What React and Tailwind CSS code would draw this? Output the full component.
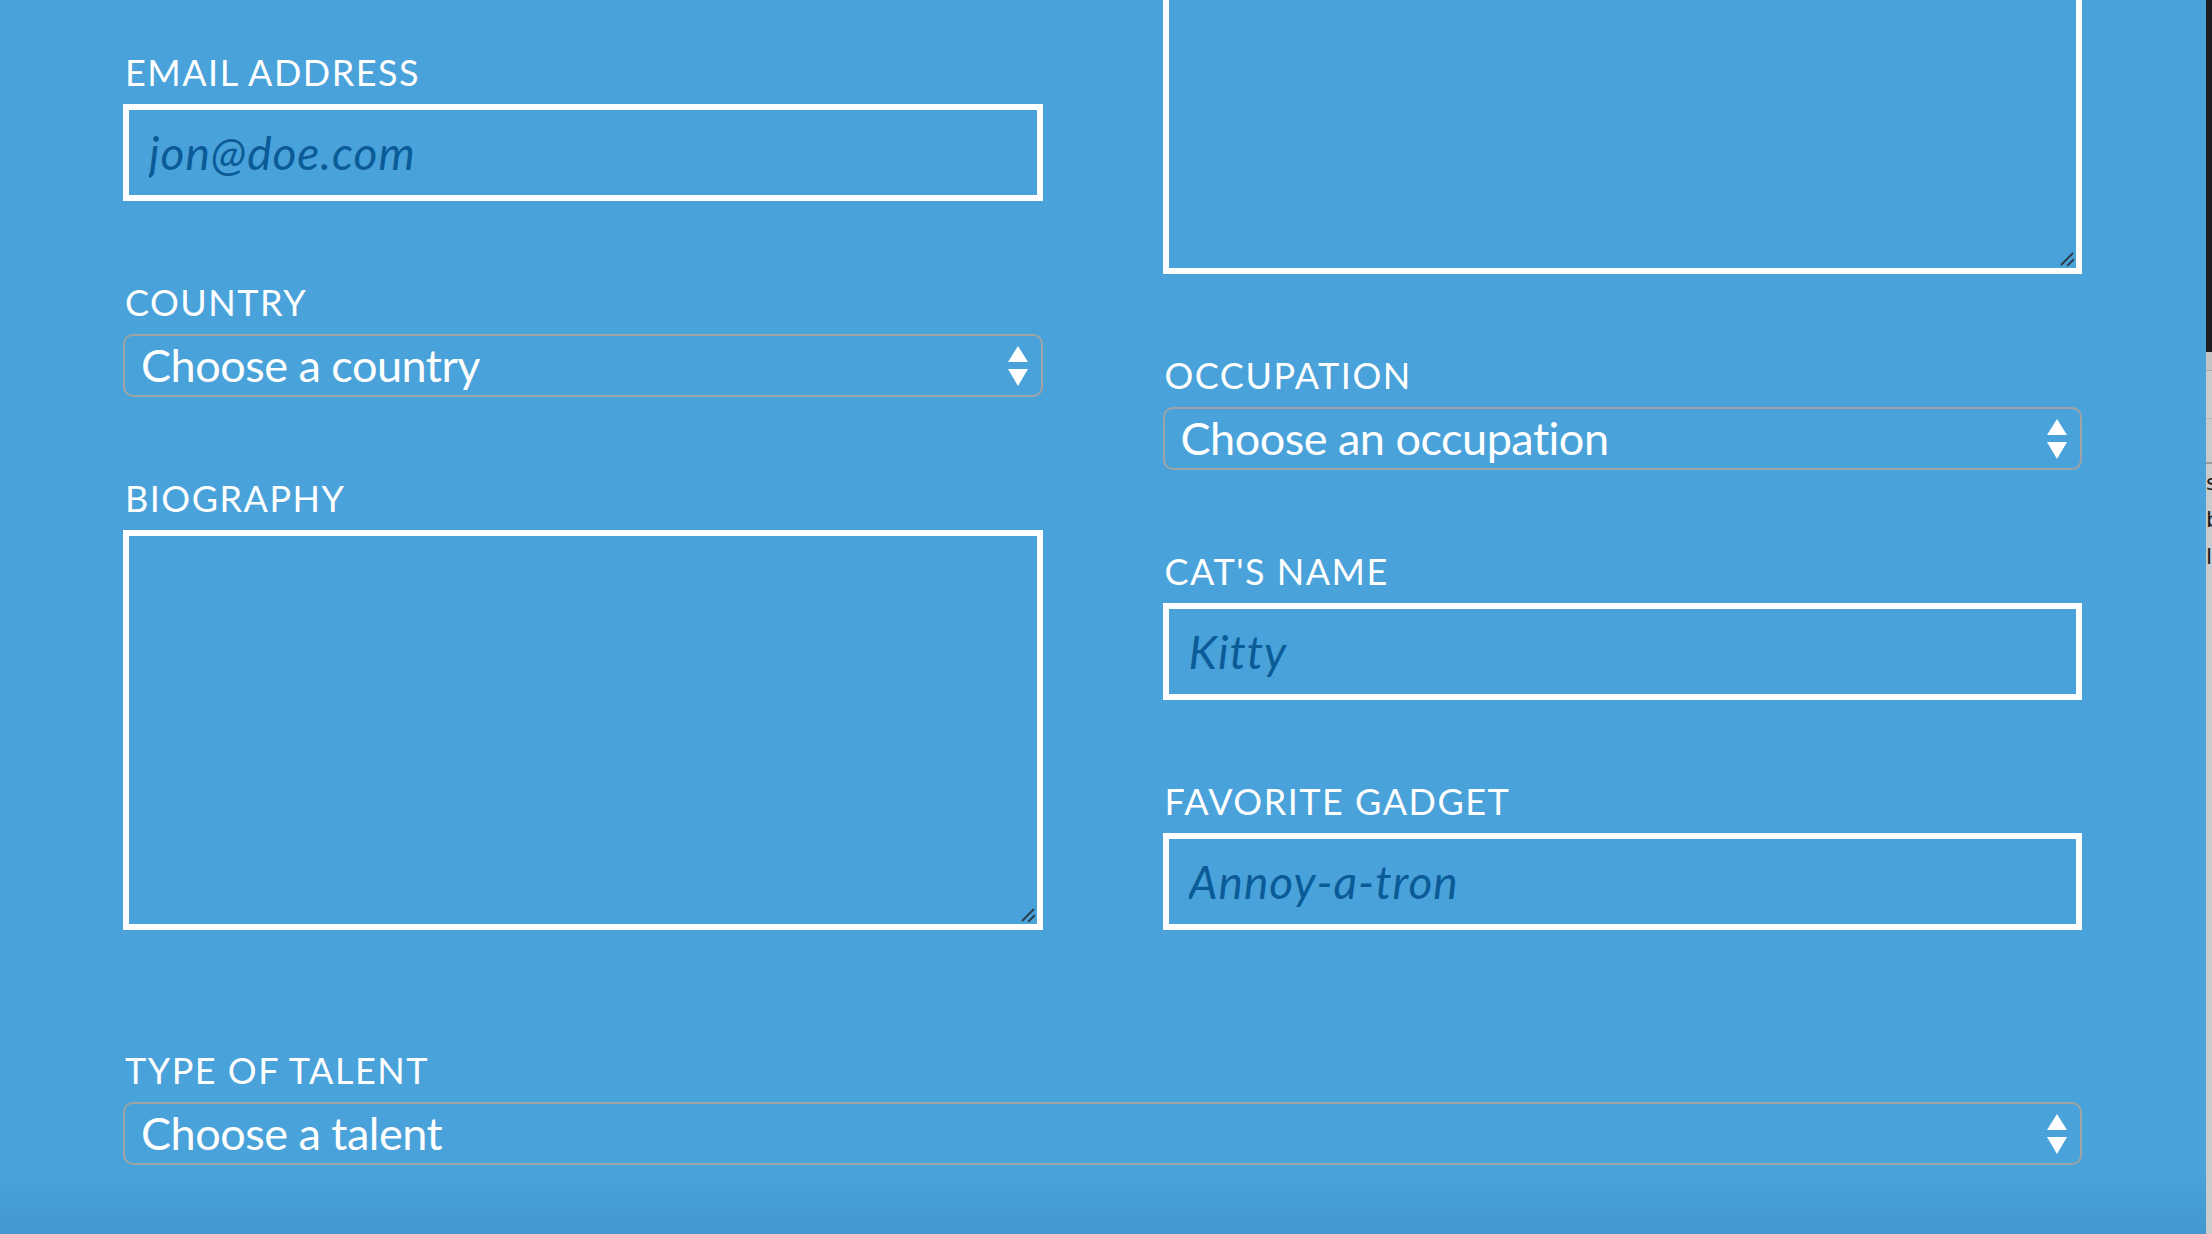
import { useState } from "react";

const labelCls =
  "block text-[36px] leading-[36px] tracking-[1.5px] text-white uppercase pl-[2px] mb-[14px]";
const inputCls =
  "block w-full h-[97px] border-[6px] border-white bg-transparent px-[20px] text-[46px] tracking-[1px] text-white outline-none placeholder:italic placeholder:text-[#0b5b98]";

function Field({ label, className = "", children }) {
  return (
    <div className={className}>
      <label className={labelCls}>{label}</label>
      {children}
    </div>
  );
}

function Arrows() {
  return (
    <svg
      className="pointer-events-none absolute right-[15px] top-1/2 -translate-y-1/2"
      width="20"
      height="40"
      viewBox="0 0 20 40"
    >
      <path d="M10 0 L20 16 L0 16 Z" fill="white" />
      <path d="M0 23 L20 23 L10 40 Z" fill="white" />
    </svg>
  );
}

function Select({ placeholder }) {
  const [value, setValue] = useState("");
  return (
    <div className="relative">
      <select
        value={value}
        onChange={(e) => setValue(e.target.value)}
        className="block w-full h-[63px] appearance-none rounded-[10px] border-2 border-[#9fa3a6] bg-transparent pl-[16px] pr-[50px] text-[45px] leading-[59px] tracking-[-0.5px] text-white outline-none"
      >
        <option value="">{placeholder}</option>
      </select>
      <Arrows />
    </div>
  );
}

function Grip() {
  return (
    <svg
      className="pointer-events-none absolute right-[8px] bottom-[8px]"
      width="14"
      height="14"
      viewBox="0 0 14 14"
    >
      <path d="M1 13 L13 1" stroke="#2b3d4f" strokeWidth="2" />
      <path d="M7 14 L14 7" stroke="#2b3d4f" strokeWidth="2" />
    </svg>
  );
}

function TextArea({ className = "" }) {
  return (
    <div className="relative">
      <textarea
        className={
          "block w-full resize-none border-white bg-transparent p-4 text-[36px] text-white outline-none " +
          className
        }
      />
      <Grip />
    </div>
  );
}

export default function App() {
  return (
    <div
      className="flex h-[1234px] w-full overflow-hidden bg-[#49a2d9]"
      style={{ fontFamily: "Lato, 'Open Sans', sans-serif" }}
    >
      <div className="relative flex-1">
        <div className="pl-[123px] pr-[124px]">
          <div className="flex gap-[120px]">
            {/* left column */}
            <div className="flex-1 pt-[54px]">
              <Field label="Email address">
                <input className={inputCls} placeholder="jon@doe.com" />
              </Field>
              <Field label="Country" className="mt-[83px]">
                <Select placeholder="Choose a country" />
              </Field>
              <Field label="Biography" className="mt-[83px]">
                <TextArea className="h-[400px] border-[6px]" />
              </Field>
            </div>

            {/* right column, top of its textarea is scrolled off */}
            <div className="flex-1">
              <TextArea className="h-[274px] border-x-[6px] border-b-[6px] border-t-0" />
              <Field label="Occupation" className="mt-[83px]">
                <Select placeholder="Choose an occupation" />
              </Field>
              <Field label="Cat's name" className="mt-[83px]">
                <input className={inputCls} placeholder="Kitty" />
              </Field>
              <Field label="Favorite gadget" className="mt-[83px]">
                <input className={inputCls} placeholder="Annoy-a-tron" />
              </Field>
            </div>
          </div>

          <Field label="Type of talent" className="mt-[122px]">
            <Select placeholder="Choose a talent" />
          </Field>
        </div>
        <div className="pointer-events-none absolute inset-x-0 bottom-0 h-[60px] bg-gradient-to-b from-[#49a2d9] to-[#4398ce]" />
      </div>

      {/* edge of the window behind */}
      <div className="flex w-[6px] flex-col overflow-hidden">
        <div className="h-[352px] bg-[#1e1f23]" />
        <div className="h-[19px] border-b border-[#a9a9a9] bg-[#c4c4c4]" />
        <div className="h-[48px] border-b border-[#b5b5b5] bg-[#cbcbcb]" />
        <div className="h-[45px] border-b-2 border-[#9a9a9a] bg-[#cbcbcb]" />
        <div
          className="flex-1 bg-[#cbcbcb] text-[22px] leading-[37px] text-[#1b1b1b]"
          style={{ fontFamily: "'DejaVu Sans', sans-serif" }}
        >
          <div>s</div>
          <div>b</div>
          <div>l</div>
        </div>
      </div>
    </div>
  );
}
